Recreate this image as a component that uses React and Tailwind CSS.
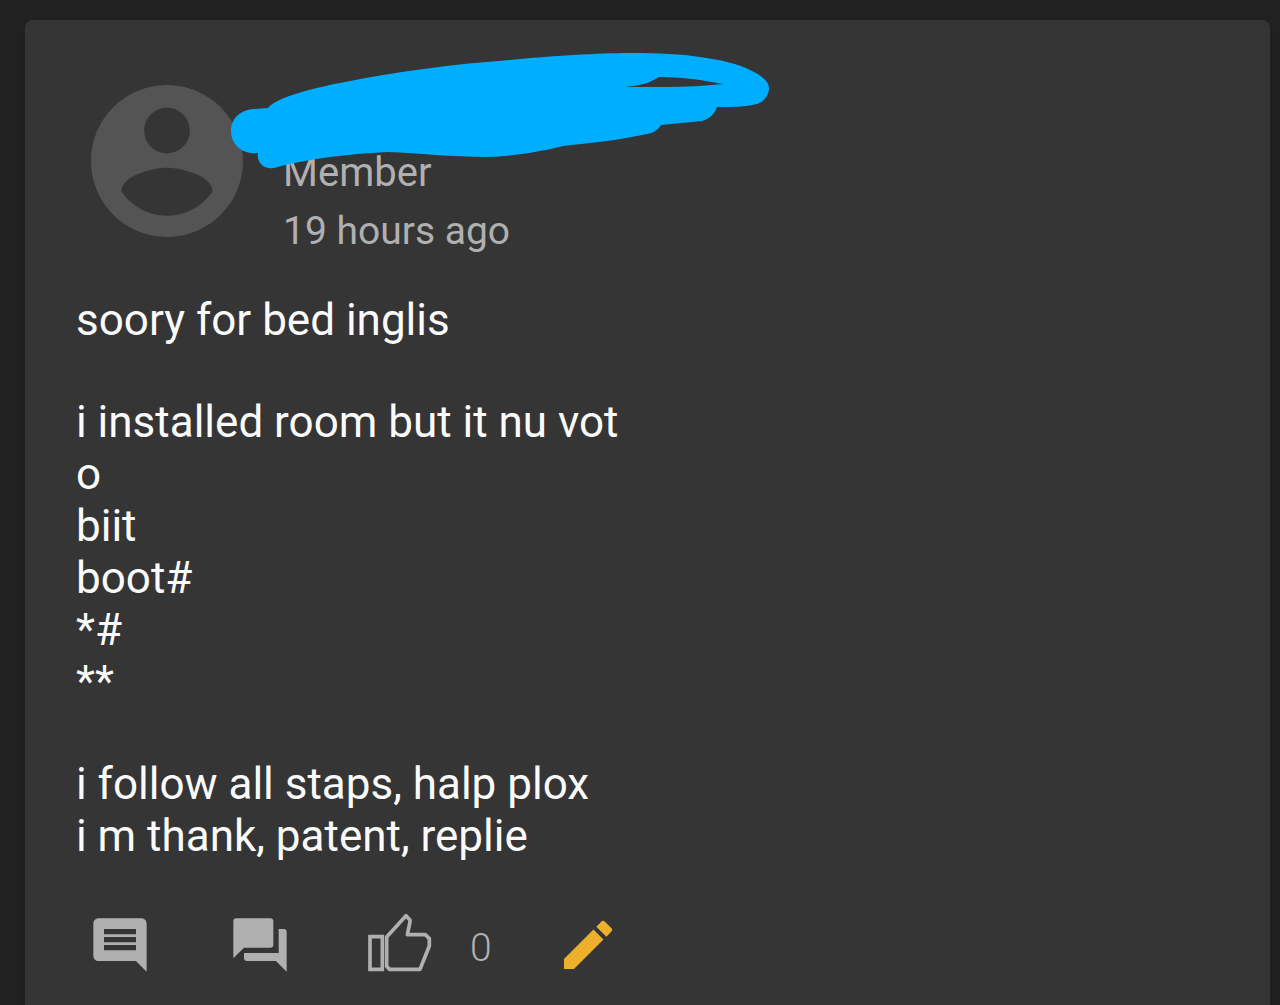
import { useState } from "react";
import { MdComment, MdEdit, MdQuestionAnswer } from "react-icons/md";

const post = {
  role: "Member",
  time: "19 hours ago",
  paragraphs: [
    ["soory for bed inglis"],
    ["i installed room but it nu vot", "o", "biit", "boot#", "*#", "**"],
    ["i follow all staps, halp plox", "i m thank, patent, replie"],
  ],
};

const Avatar = () => (
  <svg
    viewBox="2 2 20 20"
    className="size-[152px] shrink-0 fill-[#545454]"
    role="img"
    aria-label="User avatar"
  >
    <path d="M12 2C6.48 2 2 6.48 2 12s4.48 10 10 10 10-4.48 10-10S17.52 2 12 2zm0 3c1.66 0 3 1.34 3 3s-1.34 3-3 3-3-1.34-3-3 1.34-3 3-3zm0 14.2c-2.5 0-4.71-1.28-6-3.22.03-1.99 4-3.08 6-3.08 1.99 0 5.97 1.09 6 3.08-1.29 1.94-3.5 3.22-6 3.22z" />
  </svg>
);

// marker stroke that hides the user name
const Scribble = () => (
  <svg
    viewBox="231 50 540 120"
    className="absolute -top-[35px] left-[155px] h-[120px] w-[540px] fill-[#00aeff]"
    aria-hidden="true"
  >
    <path
      fillRule="evenodd"
      d="M231 131C231 118 241 110 253 109L268 108C276 97 318 87 345 82C400 71 455 64 510 60C550 56 600 53 630 53C660 53 680 54 700 57C722 60 738 64 750 70C763 76 769 82 769 88C769 95 764 102 757 104C745 107 733 107 717 107C715 114 709 119 702 121L661 125C658 130 653 133 647 134C620 140 590 143 563 146C535 153 512 156 487 157C450 157 420 153 387 152C345 154 312 159 285 165L274 168C264 170 256 162 258 153C243 155 231 145 231 131ZM625 87C634 86 641 85 647 83C652 81 656 79 659 77C672 77 686 78 700 80L723 84C704 86 686 87 667 87Z"
    />
  </svg>
);

const ThumbIcon = () => (
  <svg
    viewBox="54 69 192 192"
    className="size-16 fill-none stroke-current"
    strokeWidth="11"
    strokeLinejoin="round"
    aria-hidden="true"
  >
    <path strokeLinejoin="miter" d="M60 140H97V238H60Z" />
    <path d="M110 141L168 77L180 90V96L172 134H226L238 146V168L210 238H119L110 229Z" />
  </svg>
);

const App = () => {
  const [likes, setLikes] = useState(0);

  return (
    <main className="flex min-h-screen flex-col bg-[#212121] pt-5 pr-[10px] pl-[25px] font-[Roboto,sans-serif]">
      <article className="flex-1 rounded-t-lg bg-[#353535] px-[51px] pt-[65px] pb-7 shadow-md">
        <header className="relative flex items-start gap-10 pl-[15px]">
          <Avatar />
          <div className="pt-[58px] leading-[59px] text-[#b0b0b0]">
            <p className="text-[40px]">{post.role}</p>
            <p className="text-[39px]">{post.time}</p>
          </div>
          <Scribble />
        </header>

        <div className="mt-[33px] space-y-[50px] text-[44px] leading-[52px] text-[#fafafa]">
          {post.paragraphs.map((lines) => (
            <p key={lines[0]}>
              {lines.map((line) => (
                <span key={line} className="block">
                  {line}
                </span>
              ))}
            </p>
          ))}
        </div>

        <footer className="mt-[51px] flex items-start pl-3 text-[#b0b0b0]">
          <button type="button" aria-label="Comment" className="mr-[76px]">
            <MdComment className="size-16" />
          </button>
          <button type="button" aria-label="Quote" className="mr-[76px]">
            <MdQuestionAnswer className="size-16" />
          </button>
          <button
            type="button"
            aria-label="Like"
            onClick={() => setLikes(likes + 1)}
          >
            <ThumbIcon />
          </button>
          <span className="mr-16 ml-[38px] text-[39px] leading-[70px] font-light">
            {likes}
          </span>
          <button type="button" aria-label="Edit" className="text-[#edb02c]">
            <MdEdit className="size-16" />
          </button>
        </footer>
      </article>
    </main>
  );
};

export default App;
